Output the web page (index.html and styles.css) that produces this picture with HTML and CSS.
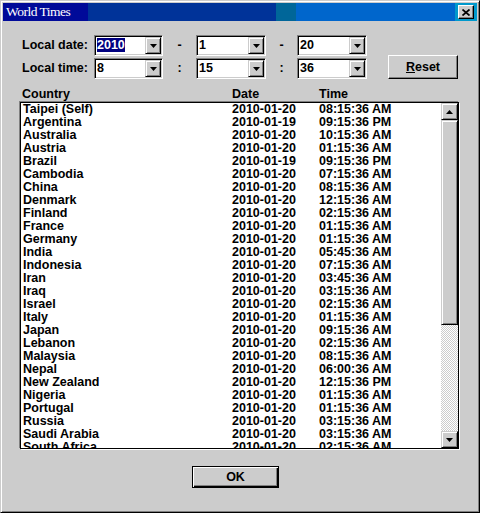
FILE: index.html
```html
<!DOCTYPE html>
<html>
<head>
<meta charset="utf-8">
<title>World Times</title>
<link rel="stylesheet" href="styles.css">
</head>
<body>
<div class="window">
  <div class="titlebar">
    <span class="title">World Times</span>
    <span class="close"><svg width="8" height="7" viewBox="0 0 8 7"><path d="M0.5 0.5 L7.5 6.5 M7.5 0.5 L0.5 6.5" stroke="#000" stroke-width="1.7" fill="none"/></svg></span>
  </div>
  <div class="main">
    <div class="controls">
      <span class="label">Local date:</span>
      <div class="combo"><span class="val"><span class="sel">2010</span></span><span class="drop"><svg width="7" height="4" viewBox="0 0 7 4"><path d="M0 0H7L3.5 4Z" fill="#000"/></svg></span></div>
      <span class="sep">-</span>
      <div class="combo"><span class="val">1</span><span class="drop"><svg width="7" height="4" viewBox="0 0 7 4"><path d="M0 0H7L3.5 4Z" fill="#000"/></svg></span></div>
      <span class="sep">-</span>
      <div class="combo"><span class="val">20</span><span class="drop"><svg width="7" height="4" viewBox="0 0 7 4"><path d="M0 0H7L3.5 4Z" fill="#000"/></svg></span></div>
      <button class="btn reset"><u>R</u>eset</button>
      <span class="label r2">Local time:</span>
      <div class="combo r2"><span class="val">8</span><span class="drop"><svg width="7" height="4" viewBox="0 0 7 4"><path d="M0 0H7L3.5 4Z" fill="#000"/></svg></span></div>
      <span class="sep r2">:</span>
      <div class="combo r2"><span class="val">15</span><span class="drop"><svg width="7" height="4" viewBox="0 0 7 4"><path d="M0 0H7L3.5 4Z" fill="#000"/></svg></span></div>
      <span class="sep r2">:</span>
      <div class="combo r2"><span class="val">36</span><span class="drop"><svg width="7" height="4" viewBox="0 0 7 4"><path d="M0 0H7L3.5 4Z" fill="#000"/></svg></span></div>
    </div>
    <div class="list-head"><span>Country</span><span>Date</span><span>Time</span></div>
    <div class="list">
      <div class="rows">
        <div class="row"><span>Taipei (Self)</span><span>2010-01-20</span><span>08:15:36 AM</span></div>
        <div class="row"><span>Argentina</span><span>2010-01-19</span><span>09:15:36 PM</span></div>
        <div class="row"><span>Australia</span><span>2010-01-20</span><span>10:15:36 AM</span></div>
        <div class="row"><span>Austria</span><span>2010-01-20</span><span>01:15:36 AM</span></div>
        <div class="row"><span>Brazil</span><span>2010-01-19</span><span>09:15:36 PM</span></div>
        <div class="row"><span>Cambodia</span><span>2010-01-20</span><span>07:15:36 AM</span></div>
        <div class="row"><span>China</span><span>2010-01-20</span><span>08:15:36 AM</span></div>
        <div class="row"><span>Denmark</span><span>2010-01-20</span><span>12:15:36 AM</span></div>
        <div class="row"><span>Finland</span><span>2010-01-20</span><span>02:15:36 AM</span></div>
        <div class="row"><span>France</span><span>2010-01-20</span><span>01:15:36 AM</span></div>
        <div class="row"><span>Germany</span><span>2010-01-20</span><span>01:15:36 AM</span></div>
        <div class="row"><span>India</span><span>2010-01-20</span><span>05:45:36 AM</span></div>
        <div class="row"><span>Indonesia</span><span>2010-01-20</span><span>07:15:36 AM</span></div>
        <div class="row"><span>Iran</span><span>2010-01-20</span><span>03:45:36 AM</span></div>
        <div class="row"><span>Iraq</span><span>2010-01-20</span><span>03:15:36 AM</span></div>
        <div class="row"><span>Israel</span><span>2010-01-20</span><span>02:15:36 AM</span></div>
        <div class="row"><span>Italy</span><span>2010-01-20</span><span>01:15:36 AM</span></div>
        <div class="row"><span>Japan</span><span>2010-01-20</span><span>09:15:36 AM</span></div>
        <div class="row"><span>Lebanon</span><span>2010-01-20</span><span>02:15:36 AM</span></div>
        <div class="row"><span>Malaysia</span><span>2010-01-20</span><span>08:15:36 AM</span></div>
        <div class="row"><span>Nepal</span><span>2010-01-20</span><span>06:00:36 AM</span></div>
        <div class="row"><span>New Zealand</span><span>2010-01-20</span><span>12:15:36 PM</span></div>
        <div class="row"><span>Nigeria</span><span>2010-01-20</span><span>01:15:36 AM</span></div>
        <div class="row"><span>Portugal</span><span>2010-01-20</span><span>01:15:36 AM</span></div>
        <div class="row"><span>Russia</span><span>2010-01-20</span><span>03:15:36 AM</span></div>
        <div class="row"><span>Saudi Arabia</span><span>2010-01-20</span><span>03:15:36 AM</span></div>
        <div class="row"><span>South Africa</span><span>2010-01-20</span><span>02:15:36 AM</span></div>
      </div>
      <div class="scrollbar">
        <div class="sbtn"><svg width="7" height="4" viewBox="0 0 7 4"><path d="M0 4H7L3.5 0Z" fill="#000"/></svg></div>
        <div class="thumb"></div>
        <div class="track"></div>
        <div class="sbtn"><svg width="7" height="4" viewBox="0 0 7 4"><path d="M0 0H7L3.5 4Z" fill="#000"/></svg></div>
      </div>
    </div>
    <div class="footer"><button class="btn ok">OK</button></div>
  </div>
</div>
</body>
</html>
```
FILE: styles.css
```css
* { box-sizing: border-box; }
body {
  margin: 0;
  background: #ccc;
  font-family: "Liberation Sans", Arial, sans-serif;
  color: #000;
}
.window {
  width: 480px;
  height: 513px;
  background: #ccc;
  border: 1px solid;
  border-color: #ccc #000 #000 #ccc;
  box-shadow: inset 1px 1px #fff, inset -1px -1px #808080;
  padding: 2px;
  display: flex;
  flex-direction: column;
}
.titlebar {
  height: 18px;
  flex: none;
  display: flex;
  align-items: center;
  justify-content: space-between;
  padding: 0 3px;
  background: linear-gradient(to right, #000a99 0 85px, #003399 85px 273px, #006699 273px 293px, #0066cc 293px 452px, #0099cc 452px);
}
.title {
  font-family: "Liberation Serif", "Times New Roman", serif;
  font-size: 13.5px;
  letter-spacing: -0.5px;
  color: #fff;
  line-height: 18px;
}
.close {
  width: 16px;
  height: 14px;
  background: #ccc;
  border: 1px solid;
  border-color: #fff #000 #000 #fff;
  box-shadow: inset -1px -1px #808080;
  display: flex;
  align-items: center;
  justify-content: center;
}
.main {
  flex: 1;
  padding: 0 17px;
  display: flex;
  flex-direction: column;
  font-weight: bold;
  font-size: 12.5px;
}
.controls {
  display: grid;
  grid-template-columns: 72px 69px 33px 70px 31px 70px 21px 70px;
  grid-template-rows: 21px 21px;
  row-gap: 2px;
  margin: 14px 0 0 2px;
}
.r2 { grid-row: 2; }
.label { line-height: 21px; white-space: nowrap; }
.combo {
  background: #fff;
  border: 1px solid;
  border-color: #808080 #fff #fff #808080;
  box-shadow: inset 1px 1px #000, inset -1px -1px #ccc;
  padding: 1px;
  display: flex;
  align-items: center;
}
.val { flex: 1; padding-left: 1px; line-height: 13px; }
.sel { background: #000080; color: #fff; }
.drop {
  width: 16px;
  height: 17px;
  background: #ccc;
  border: 1px solid;
  border-color: #ccc #000 #000 #ccc;
  box-shadow: inset 1px 1px #fff, inset -1px -1px #808080;
  display: flex;
  align-items: center;
  justify-content: center;
}
.sep { text-align: center; line-height: 21px; }
.btn {
  background: #ccc;
  border: 1px solid;
  border-color: #fff #000 #000 #fff;
  box-shadow: inset -1px -1px #808080;
  font: bold 12.5px "Liberation Sans", Arial, sans-serif;
  color: #000;
  padding: 0;
}
.reset {
  grid-column: 8;
  grid-row: 1 / 3;
  align-self: end;
  height: 24px;
}
.list-head {
  display: grid;
  grid-template-columns: 210px 87px auto;
  margin-top: 9px;
  padding-left: 2px;
  height: 13px;
  line-height: 13px;
}
.list {
  margin-top: 1px;
  width: 439px;
  height: 347px;
  flex: none;
  background: #fff;
  border: 1px solid #000;
  box-shadow: -1px -1px #808080, 1px 1px #fff;
  display: flex;
}
.rows {
  flex: 1;
  overflow: hidden;
  padding-left: 2px;
}
.row {
  display: grid;
  grid-template-columns: 209px 87px auto;
  height: 13px;
  line-height: 13px;
  white-space: nowrap;
}
.scrollbar {
  width: 17px;
  display: flex;
  flex-direction: column;
}
.sbtn, .thumb {
  background: #ccc;
  border: 1px solid;
  border-color: #ccc #000 #000 #ccc;
  box-shadow: inset 1px 1px #fff, inset -1px -1px #808080;
}
.sbtn {
  height: 17px;
  flex: none;
  display: flex;
  align-items: center;
  justify-content: center;
}
.thumb { height: 205px; flex: none; }
.track {
  flex: 1;
  background-color: #fff;
  background-image: conic-gradient(#fff 25%, #ccc 0 50%, #fff 0 75%, #ccc 0);
  background-size: 2px 2px;
}
.footer {
  margin-top: 17px;
  padding-left: 172px;
}
.ok {
  width: 87px;
  height: 22px;
  border: 1px solid #000;
  box-shadow: inset 1px 1px #fff, inset -1px -1px #000, inset -2px -2px #808080;
}
```
